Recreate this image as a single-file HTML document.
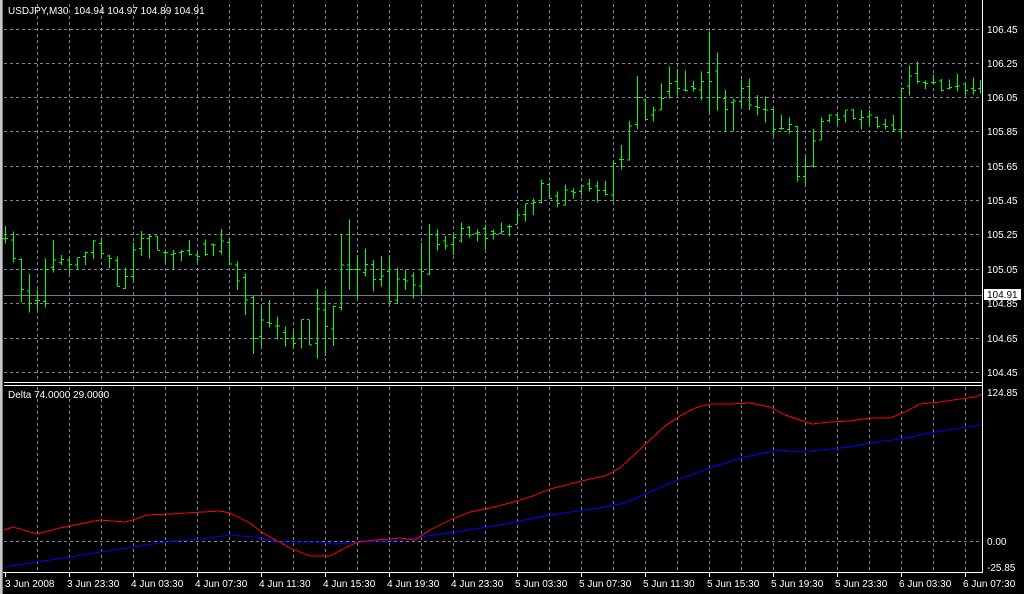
<!DOCTYPE html>
<html><head><meta charset="utf-8"><style>
html,body{margin:0;padding:0;background:#000;width:1024px;height:594px;overflow:hidden}
svg{display:block}
text{font-family:"Liberation Sans",sans-serif;font-size:10px;fill:#fff}
</style></head><body>
<svg width="1024" height="594" viewBox="0 0 1024 594" xmlns="http://www.w3.org/2000/svg" shape-rendering="crispEdges">
<rect width="1024" height="594" fill="#000"/>
<rect x="0" y="0" width="3" height="594" fill="#c8c8c8"/>
<rect x="2" y="0" width="1" height="594" fill="#808080"/>
<g stroke="#7b8899" stroke-width="1" stroke-dasharray="3,3" fill="none">
<path d="M37.5 4V381M69.5 4V381M101.5 4V381M133.5 4V381M165.5 4V381M197.5 4V381M229.5 4V381M261.5 4V381M293.5 4V381M325.5 4V381M357.5 4V381M389.5 4V381M421.5 4V381M453.5 4V381M485.5 4V381M517.5 4V381M549.5 4V381M581.5 4V381M613.5 4V381M645.5 4V381M677.5 4V381M709.5 4V381M741.5 4V381M773.5 4V381M805.5 4V381M837.5 4V381M869.5 4V381M901.5 4V381M933.5 4V381M965.5 4V381"/>
<path d="M37.5 387V571M69.5 387V571M101.5 387V571M133.5 387V571M165.5 387V571M197.5 387V571M229.5 387V571M261.5 387V571M293.5 387V571M325.5 387V571M357.5 387V571M389.5 387V571M421.5 387V571M453.5 387V571M485.5 387V571M517.5 387V571M549.5 387V571M581.5 387V571M613.5 387V571M645.5 387V571M677.5 387V571M709.5 387V571M741.5 387V571M773.5 387V571M805.5 387V571M837.5 387V571M869.5 387V571M901.5 387V571M933.5 387V571M965.5 387V571"/>
<path d="M4 29.5H982M4 63.5H982M4 97.5H982M4 131.5H982M4 166.5H982M4 200.5H982M4 234.5H982M4 269.5H982M4 303.5H982M4 338.5H982M4 372.5H982M4 541.5H982"/>
</g>
<path d="M4 295.5H982" stroke="#737b87" stroke-width="1"/>
<g stroke="#fff" stroke-width="1" fill="none">
<path d="M982.5 0V572M4 382.5H983M4 385.5H983M3 572.5H983"/>
</g>
<g fill="none" stroke="#00ff00" stroke-width="1" vector-effect="non-scaling-stroke">
<path transform="translate(0,210) scale(1,0.33333)" vector-effect="non-scaling-stroke" d="M5.5 48V100M3 85h2M6 85h2M13.5 64V157M11 90h2M14 145h2M21.5 145V278M19 148h2M22 238h2M29.5 192V308M27 243h2M30 280h2M37.5 238V300M35 272h2M38 272h2M45.5 145V293M43 275h2M46 178h2M53.5 90V188M51 173h2M54 150h2M61.5 135V165M59 158h2M62 148h2M69.5 143V192M67 150h2M70 163h2M77.5 143V180M75 165h2M78 143h2M85.5 125V165M83 140h2M86 128h2M93.5 90V147M91 127h2M94 93h2M101.5 82V145M99 100h2M102 130h2M109.5 135V175M107 138h2M110 145h2M117.5 140V230M115 152h2M118 230h2M125.5 172V237M123 235h2M126 200h2M133.5 97V210M131 200h2M134 120h2M141.5 63V138M139 115h2M142 85h2M149.5 73V145M147 85h2M150 80h2M157.5 78V122M155 78h2M158 122h2M165.5 118V158M163 128h2M166 128h2M173.5 120V180M171 133h2M174 130h2M181.5 120V153M179 128h2M182 125h2M189.5 90V137M187 122h2M190 133h2M197.5 128V157M195 135h2M198 140h2M205.5 88V138M203 102h2M206 133h2M213.5 100V138M211 103h2M214 105h2M221.5 57V133M219 125h2M222 93h2M229.5 82V163M227 98h2M230 162h2M237.5 155V240M235 165h2M238 213h2M245.5 190V315M243 203h2M246 270h2M253.5 257V432M251 263h2M254 385h2M261.5 290V408M259 380h2M262 330h2M269.5 270V353M267 337h2M270 340h2M277.5 320V388M275 348h2M278 348h2M285.5 350V410M283 368h2M286 385h2M293.5 362V415M291 385h2M294 400h2M301.5 328V415M299 385h2M302 328h2M309.5 328V405M307 328h2M310 405h2M317.5 237V445M315 400h2M318 297h2M325.5 242V438M323 300h2M326 350h2M333.5 287V408M331 357h2M334 290h2M341.5 72V302M339 293h2M342 165h2M349.5 28V240M347 165h2M350 178h2M357.5 135V265M355 178h2M358 178h2M365.5 115V200M363 187h2M366 163h2M373.5 150V245M371 163h2M374 208h2M381.5 138V230M379 208h2M382 198h2M389.5 135V280M387 185h2M390 275h2M397.5 172V282M395 270h2M398 207h2M405.5 178V240M403 208h2M406 213h2M413.5 188V265M411 198h2M414 225h2M421.5 98V250M419 228h2M422 185h2M429.5 42V195M427 192h2M430 73h2M437.5 58V122M435 75h2M438 103h2M445.5 78V118M443 93h2M446 108h2M453.5 72V135M451 103h2M454 83h2M461.5 38V98M459 93h2M462 55h2M469.5 48V82M467 52h2M470 75h2M477.5 58V95M475 70h2M478 68h2M485.5 45V118M483 55h2M486 85h2"/>
<path transform="translate(0,30) scale(1,0.33333)" vector-effect="non-scaling-stroke" d="M493.5 598V628M491 605h2M494 610h2M501.5 577V612M499 610h2M502 605h2M509.5 583V620M507 590h2M510 590h2M517.5 540V583M515 583h2M518 555h2M525.5 520V575M523 553h2M526 520h2M533.5 505V555M531 520h2M534 518h2M541.5 448V520M539 518h2M542 460h2M549.5 458V505M547 463h2M550 505h2M557.5 485V533M555 498h2M558 520h2M565.5 463V527M563 525h2M566 480h2M573.5 475V505M571 485h2M574 488h2M581.5 465V497M579 485h2M582 468h2M589.5 447V485M587 462h2M590 475h2M597.5 455V518M595 468h2M598 482h2M605.5 453V495M603 482h2M606 493h2M613.5 397V515M611 495h2M614 400h2M621.5 345V418M619 388h2M622 388h2M629.5 273V392M627 390h2M630 288h2M637.5 138V297M635 283h2M638 203h2M645.5 205V268M643 210h2M646 268h2M653.5 230V275M651 255h2M654 240h2M661.5 160V240M659 240h2M662 205h2M669.5 110V205M667 185h2M670 160h2M677.5 115V193M675 155h2M678 175h2M685.5 122V185M683 180h2M686 182h2M693.5 153V185M691 170h2M694 175h2M701.5 125V212M699 180h2M702 155h2M709.5 5V247M707 127h2M710 155h2M717.5 68V242M715 123h2M718 202h2M725.5 180V305M723 205h2M726 238h2M733.5 205V305M731 218h2M734 213h2M741.5 148V233M739 215h2M742 175h2M749.5 145V240M747 170h2M750 225h2M757.5 195V257M755 230h2M758 232h2M765.5 200V278M763 238h2M766 240h2M773.5 237V318M771 238h2M774 298h2M781.5 255V298M779 295h2M782 295h2M789.5 262V310M787 298h2M790 283h2M797.5 288V455M795 290h2M798 440h2M805.5 380V463M803 440h2M806 410h2M813.5 297V412M811 408h2M814 333h2M821.5 262V330M819 330h2M822 275h2M829.5 253V278M827 272h2M830 255h2M837.5 252V285M835 255h2M838 268h2M845.5 240V278M843 258h2M846 240h2M853.5 237V268M851 240h2M854 265h2M861.5 240V298M859 268h2M862 262h2M869.5 240V285M867 260h2M870 255h2M877.5 260V295M875 262h2M878 290h2M885.5 267V298M883 283h2M886 290h2M893.5 255V305M891 285h2M894 298h2M901.5 172V318M899 298h2M902 175h2M909.5 107V197M907 168h2M910 138h2M917.5 95V160M915 130h2M918 155h2M925.5 152V177M923 158h2M926 160h2M933.5 133V162M931 158h2M934 158h2M941.5 147V183M939 153h2M942 182h2M949.5 148V178M947 175h2M950 172h2M957.5 132V185M955 170h2M958 168h2M965.5 162V195M963 162h2M966 182h2M973.5 143V193M971 175h2M974 182h2M980.5 150V190M978 175h2"/>
</g>
<g fill="none" stroke-width="1">
<polyline stroke="#0000ff" points="4,567 37,562 70,557 100,552 133,547 165,542 200,539 230,535 255,537 280,542 320,542 333,544 350,543 360,542 400,540 420,537 450,533 500,525 550,515 600,508 625,503 650,492 680,479 710,468 740,458 760,454 780,450 800,452 820,450 850,447 870,443 900,439 930,433 960,428 982,425"/>
<polyline stroke="#ff0000" points="4,530 13,527 37,534 60,528 80,524 100,520 125,522 133,520 147,515 170,514 203,512 220,511 230,513 250,523 263,533 290,548 310,556 330,556 345,548 358,542 375,540 390,539 400,538 415,540 430,530 450,520 470,512 490,508 510,503 530,497 550,489 570,484 590,479 605,476 620,468 635,454 650,440 665,426 680,416 695,408 710,404 730,404 750,403 770,407 785,415 800,420 812,424 830,422 850,421 870,418 890,418 905,412 920,404 940,402 960,399 975,397 982,394"/>
</g>
<text x="8" y="14">USDJPY,M30&#160;&#160;104.94 104.97 104.89 104.91</text>
<text x="8" y="398">Delta 74.0000 29.0000</text>
<g>
<text x="987" y="33">106.45</text>
<text x="987" y="67">106.25</text>
<text x="987" y="101">106.05</text>
<text x="987" y="135">105.85</text>
<text x="987" y="170">105.65</text>
<text x="987" y="204">105.45</text>
<text x="987" y="238">105.25</text>
<text x="987" y="273">105.05</text>
<text x="987" y="307">104.85</text>
<text x="987" y="342">104.65</text>
<text x="987" y="376">104.45</text>
<rect x="984" y="289" width="37" height="11" fill="#fff"/>
<text x="987" y="298" style="fill:#000">104.91</text>
<text x="987" y="396">124.85</text>
<text x="987" y="545">0.00</text>
<text x="987" y="571">-25.85</text>
</g>
<g stroke="#fff"><path d="M5.5 573V577M69.5 573V577M133.5 573V577M197.5 573V577M261.5 573V577M325.5 573V577M389.5 573V577M453.5 573V577M517.5 573V577M581.5 573V577M645.5 573V577M709.5 573V577M773.5 573V577M837.5 573V577M901.5 573V577M965.5 573V577"/></g>
<g>
<text x="5" y="587">3 Jun 2008</text>
<text x="67" y="587">3 Jun 23:30</text>
<text x="131" y="587">4 Jun 03:30</text>
<text x="195" y="587">4 Jun 07:30</text>
<text x="259" y="587">4 Jun 11:30</text>
<text x="323" y="587">4 Jun 15:30</text>
<text x="387" y="587">4 Jun 19:30</text>
<text x="451" y="587">4 Jun 23:30</text>
<text x="515" y="587">5 Jun 03:30</text>
<text x="579" y="587">5 Jun 07:30</text>
<text x="643" y="587">5 Jun 11:30</text>
<text x="707" y="587">5 Jun 15:30</text>
<text x="771" y="587">5 Jun 19:30</text>
<text x="835" y="587">5 Jun 23:30</text>
<text x="899" y="587">6 Jun 03:30</text>
<text x="963" y="587">6 Jun 07:30</text>
</g>
</svg>
</body></html>
